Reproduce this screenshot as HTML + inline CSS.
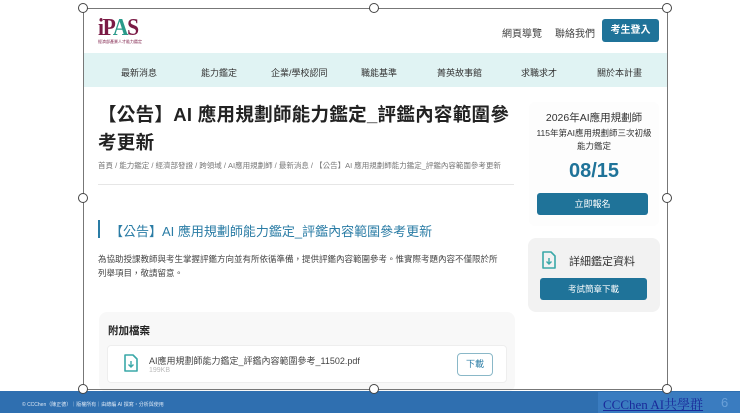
<!DOCTYPE html>
<html><head><meta charset="utf-8"><style>
*{margin:0;padding:0;box-sizing:border-box}
body{width:740px;height:413px;overflow:hidden;background:#fff;font-family:"Liberation Sans","Noto Sans CJK TC",sans-serif;position:relative;color:#222}
.a{position:absolute}
.h{position:absolute;width:10px;height:10px;border:1.5px solid #444;border-radius:50%;background:#fff;z-index:5}
</style></head><body>
<div class="a" style="left:83px;top:8px;width:585px;height:382px;border:1px solid #777;z-index:4"></div>
<div class="h" style="left:78px;top:3px"></div><div class="h" style="left:369px;top:3px"></div><div class="h" style="left:662px;top:3px"></div>
<div class="h" style="left:78px;top:193px"></div><div class="h" style="left:662px;top:193px"></div>
<div class="h" style="left:78px;top:384px"></div><div class="h" style="left:369px;top:384px"></div><div class="h" style="left:662px;top:384px"></div>
<div class="a" style="left:98px;top:15px;font:bold 24px 'Liberation Serif',serif;color:#7a1a45;letter-spacing:-1.5px;transform:scaleX(0.9);transform-origin:left">iP<span style="color:#2a9a8a">A</span>S</div>
<div class="a" style="left:98px;top:39px;font-size:4px;color:#7a1a45">經濟部產業人才能力鑑定</div>
<div class="a" style="left:502px;top:25px;font-size:10px;color:#444">網頁導覽</div>
<div class="a" style="left:555px;top:25px;font-size:10px;color:#444">聯絡我們</div>
<div class="a" style="left:602px;top:19px;width:57px;height:23px;background:#1f7399;border-radius:3px;color:#fff;font-size:10px;font-weight:bold;text-align:center;line-height:23px">考生登入</div>
<div class="a" style="left:84px;top:53px;width:583px;height:34px;background:#e0f3f3"></div>
<div class="a" style="top:66px;left:0;width:740px;font-size:9px;color:#333">
<span class="a" style="left:121px">最新消息</span><span class="a" style="left:201px">能力鑑定</span><span class="a" style="left:271px">企業/學校認同</span><span class="a" style="left:361px">職能基準</span><span class="a" style="left:437px">菁英故事館</span><span class="a" style="left:521px">求職求才</span><span class="a" style="left:597px">關於本計畫</span></div>
<div class="a" style="left:98px;top:101px;width:415px;font-size:18.5px;letter-spacing:0.3px;font-weight:bold;line-height:28px;color:#222">【公告】AI 應用規劃師能力鑑定_評鑑內容範圍參考更新</div>
<div class="a" style="left:98px;top:160px;font-size:7.5px;color:#777;white-space:nowrap">首頁 / 能力鑑定 / 經濟部發證 / 跨領域 / AI應用規劃師 / 最新消息 / 【公告】AI 應用規劃師能力鑑定_評鑑內容範圍參考更新</div>
<div class="a" style="left:98px;top:184px;width:416px;height:1px;background:#e6e6e6"></div>
<div class="a" style="left:98px;top:220px;width:2px;height:18px;background:#2a7ca5"></div>
<div class="a" style="left:110px;top:221px;font-size:13px;color:#2a7ca5">【公告】AI 應用規劃師能力鑑定_評鑑內容範圍參考更新</div>
<div class="a" style="left:98px;top:252px;width:403px;font-size:8.5px;line-height:14px;color:#444">為協助授課教師與考生掌握評鑑方向並有所依循準備，提供評鑑內容範圍參考。惟實際考題內容不僅限於所列舉項目，敬請留意。</div>
<div class="a" style="left:99px;top:312px;width:416px;height:80px;background:#f8f8f8;border-radius:8px"></div>
<div class="a" style="left:108px;top:323px;font-size:10.5px;font-weight:bold">附加檔案</div>
<div class="a" style="left:107px;top:345px;width:400px;height:38px;background:#fff;border:1px solid #eee;border-radius:4px"></div>
<svg class="a" style="left:123px;top:353px" width="16" height="20" viewBox="0 0 16 20"><path d="M2 2h8l4 4v12H2z" fill="none" stroke="#3aa8a8" stroke-width="1.6" stroke-linejoin="round"/><path d="M8 8v6M5.5 11.5L8 14l2.5-2.5" fill="none" stroke="#3aa8a8" stroke-width="1.4"/></svg>
<div class="a" style="left:149px;top:354px;font-size:9px;color:#444">AI應用規劃師能力鑑定_評鑑內容範圍參考_11502.pdf</div>
<div class="a" style="left:149px;top:367px;font-size:7px;color:#bbb">199KB</div>
<div class="a" style="left:457px;top:353px;width:36px;height:23px;border:1px solid #8ab8c8;border-radius:4px;font-size:9px;color:#2a7ca5;text-align:center;line-height:21px">下載</div>
<div class="a" style="left:529px;top:102px;width:130px;height:124px;background:#fdfdfd;border-radius:6px"></div>
<div class="a" style="left:529px;top:110px;width:130px;text-align:center;font-size:10.5px;color:#333">2026年AI應用規劃師</div>
<div class="a" style="left:533px;top:127px;width:122px;text-align:center;font-size:8.5px;line-height:13px;color:#333">115年第AI應用規劃師三次初級能力鑑定</div>
<div class="a" style="left:529px;top:160px;width:130px;text-align:center;font-size:20px;font-weight:bold;color:#1f7399">08/15</div>
<div class="a" style="left:537px;top:193px;width:111px;height:22px;background:#1f7399;border-radius:3px;color:#fff;font-size:9px;text-align:center;line-height:22px">立即報名</div>
<div class="a" style="left:528px;top:238px;width:132px;height:74px;background:#f2f2f2;border-radius:8px"></div>
<svg class="a" style="left:541px;top:250px" width="16" height="20" viewBox="0 0 16 20"><path d="M2 2h8l4 4v12H2z" fill="none" stroke="#3aa8a8" stroke-width="1.6" stroke-linejoin="round"/><path d="M8 8v6M5.5 11.5L8 14l2.5-2.5" fill="none" stroke="#3aa8a8" stroke-width="1.4"/></svg>
<div class="a" style="left:569px;top:253px;font-size:11px;color:#333">詳細鑑定資料</div>
<div class="a" style="left:540px;top:278px;width:107px;height:22px;background:#1f7399;border-radius:3px;color:#fff;font-size:8.5px;text-align:center;line-height:22px">考試簡章下載</div>
<div class="a" style="left:0;top:391px;width:740px;height:22px;background:#2f6fb0"></div>
<div class="a" style="left:22px;top:401px;font-size:5px;color:#dde8f5;white-space:nowrap">© CCChen（陳正德）｜版權所有｜由總編 AI 撰寫・分析與使用</div>
<div class="a" style="left:598px;top:392px;width:142px;height:21px;background:#3a7cc0"></div>
<div class="a" style="left:603px;top:394px;font:13px 'Liberation Serif','Noto Serif CJK SC',serif;color:#1a2a9a;text-decoration:underline;white-space:nowrap">CCChen AI共學群</div>
<div class="a" style="left:721px;top:395px;font-size:13px;color:#6aa0d8">6</div>
</body></html>
